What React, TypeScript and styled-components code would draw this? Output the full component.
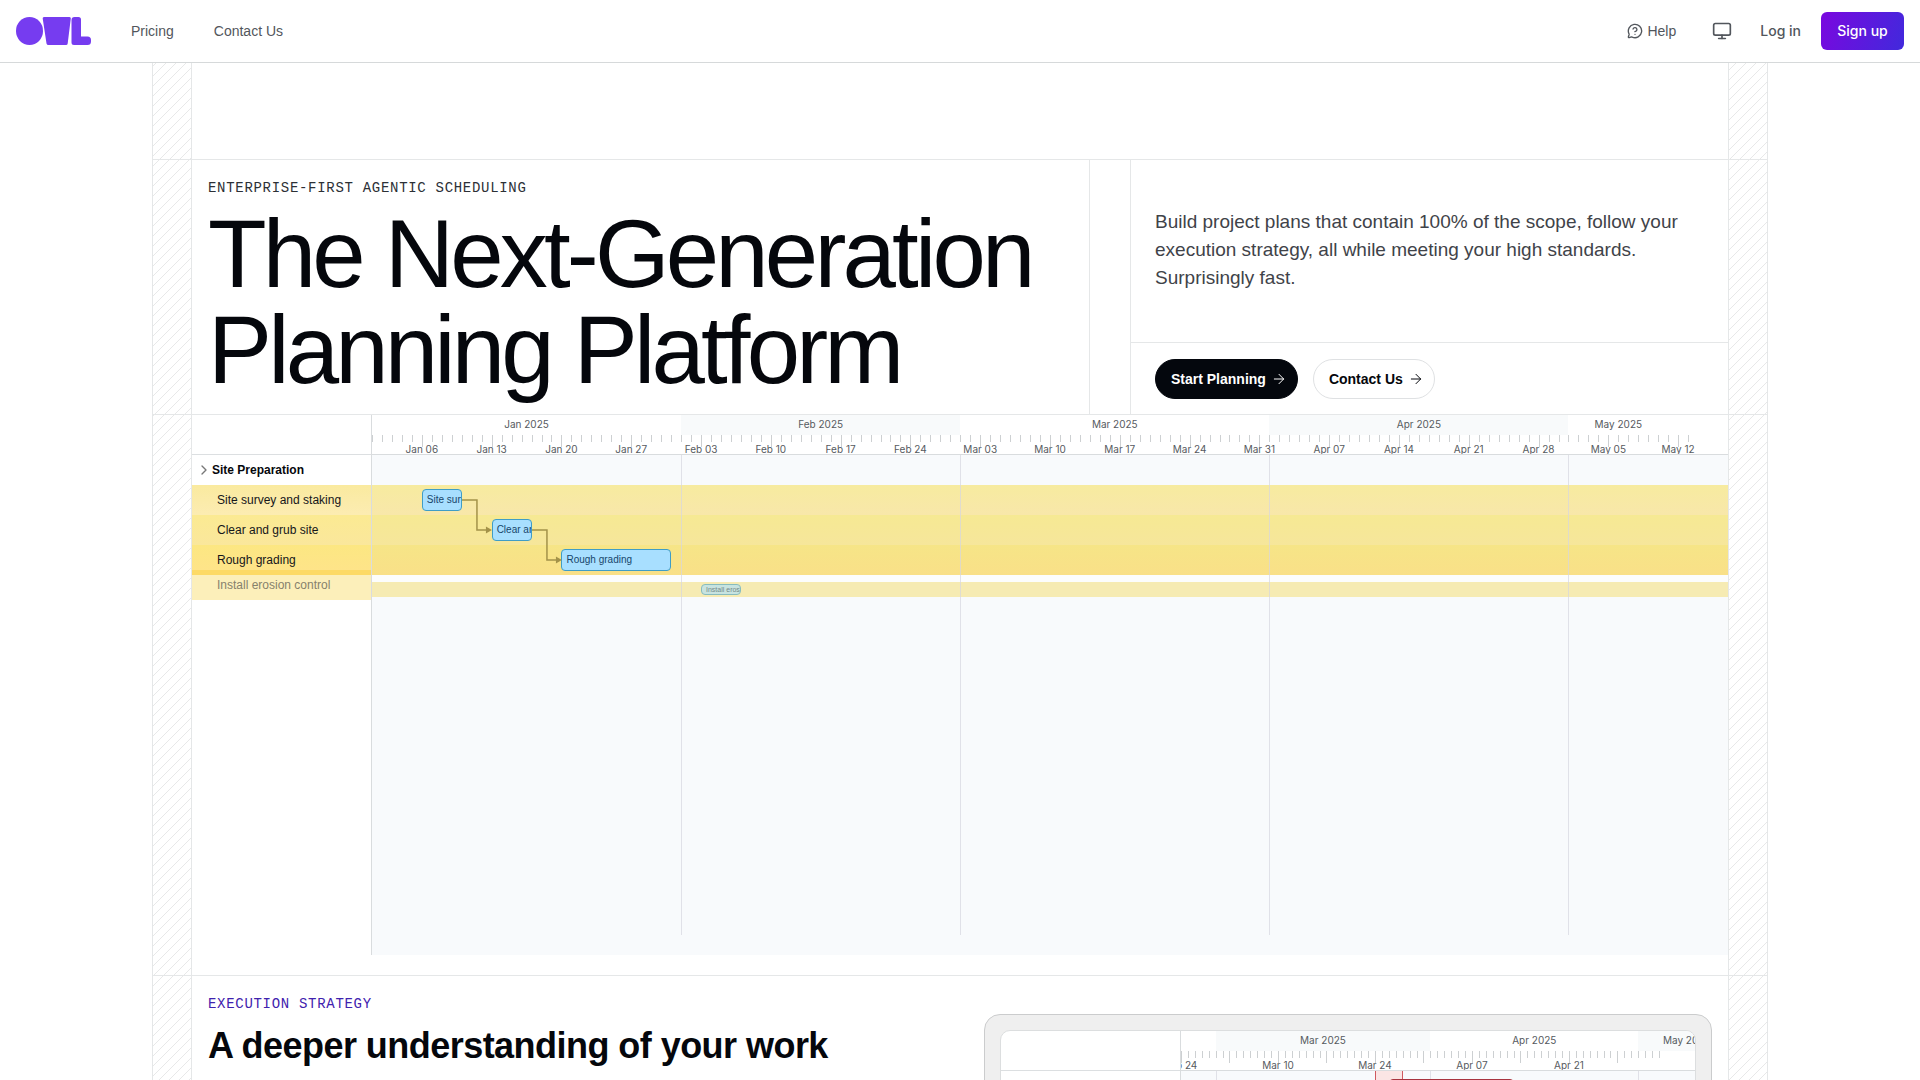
import React from 'react';
import styled, { createGlobalStyle, css } from 'styled-components';
import { ArrowRight, ChevronRight, MessageCircleQuestionMark, Monitor } from 'lucide-react';

const line = '#e5e7e8';
const sans = `"Liberation Sans", Arial, sans-serif`;
const ui = `Inter, "Liberation Sans", Arial, sans-serif`;
const mono = `"Liberation Mono", "Courier New", monospace`;

const GlobalStyle = createGlobalStyle`
  *, *::before, *::after { box-sizing: border-box; }
  body { margin: 0; background: #fff; color: #05070c; font-family: ${sans}; }
  h1, h2, p { margin: 0; }
  button { font: inherit; cursor: pointer; }
  a { color: inherit; text-decoration: none; }
`;

const Page = styled.div`
  display: flex;
  flex-direction: column;
  height: 100vh;
  overflow: hidden;
`;

/* ---------- top bar ---------- */

const TopBar = styled.header`
  display: flex;
  flex: none;
  align-items: center;
  justify-content: space-between;
  height: 63px;
  padding: 0 16px;
  border-bottom: 1px solid #d6d9da;
  font-size: 14px;
  line-height: 20px;
  color: #52565c;
`;

const Nav = styled.nav`
  display: flex;
  align-items: center;
  gap: 40px;
`;

const HomeLink = styled.a`
  display: flex;
`;

const Actions = styled.div`
  display: flex;
  align-items: center;
`;

const HelpLink = styled.a`
  display: flex;
  align-items: center;
  gap: 4px;
  margin-right: 36px;
`;

const IconButton = styled.button`
  display: flex;
  padding: 0;
  border: 0;
  background: none;
  color: inherit;
`;

const LoginLink = styled.a`
  margin: 0 20px 0 28px;
  font-family: ${ui};
  font-weight: 500;
`;

const SignUp = styled.button`
  height: 38px;
  min-width: 83px;
  padding: 0 16px;
  border: 0;
  border-radius: 6px;
  background: linear-gradient(110deg, #7a08df, #4129dc);
  color: #fff;
  font-family: ${ui};
  font-weight: 500;
`;

/* ---------- page frame ---------- */

const rail = css`
  content: '';
  border: solid ${line};
  border-width: 0 1px;
  background-image: repeating-linear-gradient(315deg, rgba(5, 7, 12, 0.09) 0, rgba(5, 7, 12, 0.09) 1px, transparent 0, transparent 50%);
  background-size: 10px 10px;
  background-attachment: fixed;
`;

const Section = styled.section<{ $grow?: boolean; $first?: boolean }>`
  display: grid;
  grid-template-columns: 40px minmax(0, 1fr) 40px;
  flex: ${p => (p.$grow ? '1 0 auto' : 'none')};
  width: 100%;
  max-width: 1616px;
  margin: 0 auto;
  border-top: ${p => (p.$first ? '0' : `1px solid ${line}`)};
  &::before { ${rail} }
  &::after { ${rail} }
`;

const Spacer = styled.div`
  height: 96px;
`;

const Eyebrow = styled.p<{ $accent?: boolean }>`
  font-family: ${mono};
  font-size: 14px;
  line-height: 20px;
  letter-spacing: 0.05em;
  text-transform: uppercase;
  color: ${p => (p.$accent ? '#3f22ae' : '#2c3036')};
`;

/* ---------- hero ---------- */

const Hero = styled.div`
  display: grid;
  grid-template-columns: minmax(0, 897fr) 42px minmax(0, 597fr);
  min-height: 254px;
`;

const HeroTitle = styled.div`
  display: flex;
  flex-direction: column;
  gap: 8px;
  padding: 18px 16px 16px;
`;

const Title = styled.h1`
  font-size: 96px;
  line-height: 96px;
  font-weight: 400;
  letter-spacing: -0.04em;
  white-space: nowrap;
`;

const Gutter = styled.div`
  border: solid ${line};
  border-width: 0 1px;
`;

const HeroSide = styled.div`
  display: flex;
  flex-direction: column;
`;

const Lead = styled.div`
  display: flex;
  flex: 1;
  align-items: center;
  padding: 0 24px 2px;
  border-bottom: 1px solid ${line};
  font-size: 19px;
  line-height: 28px;
  color: #3f4349;
`;

const ButtonRow = styled.div`
  display: flex;
  gap: 15px;
  padding: 16px 24px 15px;
`;

const Pill = styled.button<{ $dark?: boolean }>`
  display: flex;
  align-items: center;
  gap: 5px;
  height: 40px;
  padding: 0 10px 0 15px;
  border: 1px solid ${p => (p.$dark ? '#04070d' : '#dfe1e3')};
  border-radius: 20px;
  background: ${p => (p.$dark ? '#04070d' : '#fff')};
  color: ${p => (p.$dark ? '#fff' : '#05070c')};
  font-size: 14px;
  font-weight: 600;
`;

/* ---------- gantt ---------- */

const Gantt = styled.div<{ $framed?: boolean }>`
  display: grid;
  grid-template-columns: 180px minmax(0, 1fr);
  ${p => (p.$framed ? css`
    min-height: 480px;
    border: 1px solid #dcdedf;
    border-radius: 10px;
    background: #fff;
    overflow: hidden;
  ` : css`
    height: 540px;
    margin-bottom: 20px;
  `)}
`;

const Names = styled.div`
  border-right: 1px solid #d9dcde;
  font-size: 12px;
  line-height: 30px;
`;

const Corner = styled.div`
  height: 40px;
  border-bottom: 1px solid #dcdfe1;
`;

const GroupName = styled.button`
  display: flex;
  align-items: center;
  width: 100%;
  height: 30px;
  padding: 0 4px;
  border: 0;
  background: none;
  color: #05070c;
  font-weight: 600;
`;

const rowTint = {
  first: 'linear-gradient(#faea9f, #fcecb2)',
  second: 'linear-gradient(#fbea92, #fae79c)',
  third: 'linear-gradient(#fce782, #fee489 83%, #fdda66 84%)',
  incoming: '#fcefba',
};
const bandTint = {
  first: 'linear-gradient(#f7eb9f, #f8e7aa)',
  second: 'linear-gradient(#f6e993, #f6e69b)',
  third: 'linear-gradient(#f6e587, #f9e088)',
  incoming: '#f6ebb3',
};
type Tint = keyof typeof rowTint;

const TaskName = styled.div<{ $tint: Tint }>`
  height: ${p => (p.$tint === 'incoming' ? 25 : 30)}px;
  padding-left: 25px;
  line-height: ${p => (p.$tint === 'incoming' ? 20 : 30)}px;
  color: ${p => (p.$tint === 'incoming' ? '#86816c' : '#15161a')};
  background: ${p => rowTint[p.$tint]};
`;

const Chart = styled.div`
  display: flex;
  flex-direction: column;
  min-width: 0;
  overflow: hidden;
`;

const Scale = styled.div`
  position: relative;
  flex: none;
  height: 40px;
  overflow: hidden;
  border-bottom: 1px solid #d9dcde;
  font-family: ${ui};
  font-size: 10px;
  color: #565a60;
`;

/* Items on the time axis are placed by day, as a share of the visible range. */
const MonthCell = styled.div<{ $shaded: boolean }>`
  position: absolute;
  top: 0;
  height: 20px;
  line-height: 18px;
  text-align: center;
  background: ${p => (p.$shaded ? '#f8fafb' : 'transparent')};
`;

const Tick = styled.div<{ $week: boolean }>`
  position: absolute;
  top: 20px;
  width: 1px;
  height: ${p => (p.$week ? 12 : 7)}px;
  background: #cdd0d2;
`;

const WeekLabel = styled.div`
  position: absolute;
  top: 27px;
  width: 60px;
  margin-left: -30px;
  line-height: 14px;
  text-align: center;
`;

const Plot = styled.div`
  position: relative;
  flex: 1;
  padding-top: 30px;
  background: #f8fafc;
`;

const Band = styled.div<{ $tint: Tint }>`
  position: relative;
  height: ${p => (p.$tint === 'incoming' ? 15 : 30)}px;
  background: ${p => bandTint[p.$tint]};
`;

const Gap = styled.div`
  height: 7px;
  background: #fcfdfd;
`;

const MonthLine = styled.div<{ $framed?: boolean }>`
  position: absolute;
  top: 0;
  bottom: ${p => (p.$framed ? 0 : 20)}px;
  width: 1px;
  background: rgba(214, 214, 224, 0.7);
`;

const Bar = styled.div<{ $faded?: boolean }>`
  position: absolute;
  top: ${p => (p.$faded ? 2 : 4)}px;
  bottom: ${p => (p.$faded ? 2 : 4)}px;
  display: flex;
  align-items: center;
  padding-left: 4px;
  overflow: hidden;
  border: 1px solid #3f9dc6;
  border-radius: 4px;
  background: #a8dfff;
  color: #17466b;
  font-size: ${p => (p.$faded ? 7 : 10)}px;
  line-height: 1;
  white-space: nowrap;
  opacity: ${p => (p.$faded ? 0.6 : 1)};
`;

const Link = styled.svg`
  position: absolute;
  top: 15px;
  z-index: 1;
  height: 34px;
  overflow: visible;
`;

const CriticalRange = styled.div`
  position: absolute;
  top: 0;
  bottom: 0;
  border: solid #cf5a5f;
  border-width: 0 1px;
  background: #fbe5e4;
`;

const CriticalBar = styled.div`
  position: absolute;
  top: 8px;
  height: 20px;
  border: 1px solid #a8343f;
  border-radius: 4px;
  background: #c4505a;
`;

/* ---------- strategy ---------- */

const Strategy = styled.div`
  display: grid;
  grid-template-columns: minmax(0, 1fr) 728px;
  padding: 18px 16px;
`;

const StrategyText = styled.div`
  display: flex;
  flex-direction: column;
  gap: 10px;
`;

const Subtitle = styled.h2`
  font-size: 36px;
  line-height: 44px;
  font-weight: 600;
  letter-spacing: -0.015em;
  white-space: nowrap;
`;

const Device = styled.div`
  margin-top: 20px;
  padding: 15px;
  border: 1px solid #cbcccd;
  border-radius: 16px;
  background: #efefef;
`;

/* ---------- data ---------- */

interface Month { label: string; start: number; end: number; shaded: boolean }
interface Week { label: string; day: number }
interface Range { total: number; lastTick: number; weekOffset: number; months: Month[]; weeks: Week[] }

const overview: Range = {
  total: 136,
  lastTick: 132,
  weekOffset: 5,
  months: [
    { label: 'Jan 2025', start: 0, end: 31, shaded: false },
    { label: 'Feb 2025', start: 31, end: 59, shaded: true },
    { label: 'Mar 2025', start: 59, end: 90, shaded: false },
    { label: 'Apr 2025', start: 90, end: 120, shaded: true },
    { label: 'May 2025', start: 120, end: 130, shaded: false },
  ],
  weeks: ['Jan 06', 'Jan 13', 'Jan 20', 'Jan 27', 'Feb 03', 'Feb 10', 'Feb 17', 'Feb 24', 'Mar 03', 'Mar 10',
    'Mar 17', 'Mar 24', 'Mar 31', 'Apr 07', 'Apr 14', 'Apr 21', 'Apr 28', 'May 05', 'May 12']
    .map((label, i) => ({ label, day: 5 + i * 7 })),
};

const detail: Range = {
  total: 74.2,
  lastTick: 69,
  weekOffset: 0,
  months: [
    { label: 'Mar 2025', start: 5, end: 36, shaded: true },
    { label: 'Apr 2025', start: 36, end: 66, shaded: false },
    { label: 'May 2025', start: 66, end: 80, shaded: true },
  ],
  weeks: ['Feb 24', 'Mar 10', 'Mar 24', 'Apr 07', 'Apr 21'].map((label, i) => ({ label, day: i * 14 })),
};

const tasks: { name: string; tint: Tint; start: number; days: number; linked: boolean }[] = [
  { name: 'Site survey and staking', tint: 'first', start: 5, days: 4, linked: true },
  { name: 'Clear and grub site', tint: 'second', start: 12, days: 4, linked: true },
  { name: 'Rough grading', tint: 'third', start: 19, days: 11, linked: false },
  { name: 'Install erosion control', tint: 'incoming', start: 33, days: 4, linked: false },
];

const at = (range: Range, start: number, days?: number): React.CSSProperties => ({
  left: `${(start / range.total) * 100}%`,
  ...(days === undefined ? {} : { width: `${(days / range.total) * 100}%` }),
});

function TimeScale({ range }: { range: Range }) {
  return (
    <Scale>
      {range.months.map(m => (
        <MonthCell key={m.label} $shaded={m.shaded} style={at(range, m.start, m.end - m.start)}>{m.label}</MonthCell>
      ))}
      {Array.from({ length: range.lastTick + 1 }, (_, d) => (
        <Tick key={d} $week={(d - range.weekOffset) % 7 === 0} style={at(range, d)} />
      ))}
      {range.weeks.map(w => (
        <WeekLabel key={w.label} style={at(range, w.day)}>{w.label}</WeekLabel>
      ))}
    </Scale>
  );
}

function MonthLines({ range, framed }: { range: Range; framed?: boolean }) {
  return (
    <>
      {range.months.filter(m => m.start > 0).map(m => (
        <MonthLine key={m.label} $framed={framed} style={at(range, m.start)} />
      ))}
    </>
  );
}

function Logo() {
  return (
    <svg width="75" height="28" viewBox="0 0 75 28" fill="#763cf0" role="img" aria-label="OWL">
      <ellipse cx="13.5" cy="14" rx="13.5" ry="14" />
      <path d="M28 0H53.500Q55 0 54.800 1.500L51.700 26.500Q51.500 28 50 28H32.500Q30.800 28 30.500 26.500L26.700 1.500Q26.500 0 28 0Z" />
      <path d="M58.500 0H62.500Q65 0 65 2.500V19.500H71.500Q75 19.500 75 23V24.500Q75 28 71.500 28H58Q55.500 28 55.500 25.500V3Q55.500 0 58.500 0Z" />
    </svg>
  );
}

export default function App() {
  return (
    <Page>
      <GlobalStyle />
      <TopBar>
        <Nav>
          <HomeLink href="#home"><Logo /></HomeLink>
          <a href="#pricing">Pricing</a>
          <a href="#contact">Contact Us</a>
        </Nav>
        <Actions>
          <HelpLink href="#help"><MessageCircleQuestionMark size={16} strokeWidth={2} />Help</HelpLink>
          <IconButton aria-label="Theme"><Monitor size={20} strokeWidth={2} /></IconButton>
          <LoginLink href="#login">Log in</LoginLink>
          <SignUp>Sign up</SignUp>
        </Actions>
      </TopBar>

      <Section $first><Spacer /></Section>

      <Section>
        <Hero>
          <HeroTitle>
            <Eyebrow>Enterprise-first agentic scheduling</Eyebrow>
            <Title>The Next-Generation<br />Planning Platform</Title>
          </HeroTitle>
          <Gutter />
          <HeroSide>
            <Lead>
              <p>Build project plans that contain 100% of the scope, follow your execution strategy, all while meeting your high standards. Surprisingly fast.</p>
            </Lead>
            <ButtonRow>
              <Pill $dark>Start Planning <ArrowRight size={16} strokeWidth={1.5} /></Pill>
              <Pill>Contact Us <ArrowRight size={16} strokeWidth={1.5} /></Pill>
            </ButtonRow>
          </HeroSide>
        </Hero>
      </Section>

      <Section>
        <Gantt>
          <Names>
            <Corner />
            <GroupName><ChevronRight size={16} color="#777" />Site Preparation</GroupName>
            {tasks.map(t => <TaskName key={t.name} $tint={t.tint}>{t.name}</TaskName>)}
          </Names>
          <Chart>
            <TimeScale range={overview} />
            <Plot>
              {tasks.map(t => (
                <React.Fragment key={t.name}>
                  {t.tint === 'incoming' && <Gap />}
                  <Band $tint={t.tint}>
                    <Bar $faded={t.tint === 'incoming'} style={at(overview, t.start, t.days)}>{t.name}</Bar>
                    {t.linked && (
                      <Link style={at(overview, t.start + t.days, 3)} viewBox="0 0 30 34" preserveAspectRatio="none">
                        <path d="M0 0H15V30H25" fill="none" stroke="#a39249" strokeWidth="1.5" />
                        <path d="M24 26.500L30 30L24 33.500Z" fill="#a39249" />
                      </Link>
                    )}
                  </Band>
                </React.Fragment>
              ))}
              <MonthLines range={overview} />
            </Plot>
          </Chart>
        </Gantt>
      </Section>

      <Section $grow>
        <Strategy>
          <StrategyText>
            <Eyebrow $accent>Execution strategy</Eyebrow>
            <Subtitle>A deeper understanding of your work</Subtitle>
          </StrategyText>
          <Device>
            <Gantt $framed>
              <Names><Corner /></Names>
              <Chart>
                <TimeScale range={detail} />
                <Plot>
                  <MonthLines range={detail} framed />
                  <CriticalRange style={at(detail, 28, 4)} />
                  <CriticalBar style={at(detail, 30, 18)} />
                </Plot>
              </Chart>
            </Gantt>
          </Device>
        </Strategy>
      </Section>
    </Page>
  );
}
